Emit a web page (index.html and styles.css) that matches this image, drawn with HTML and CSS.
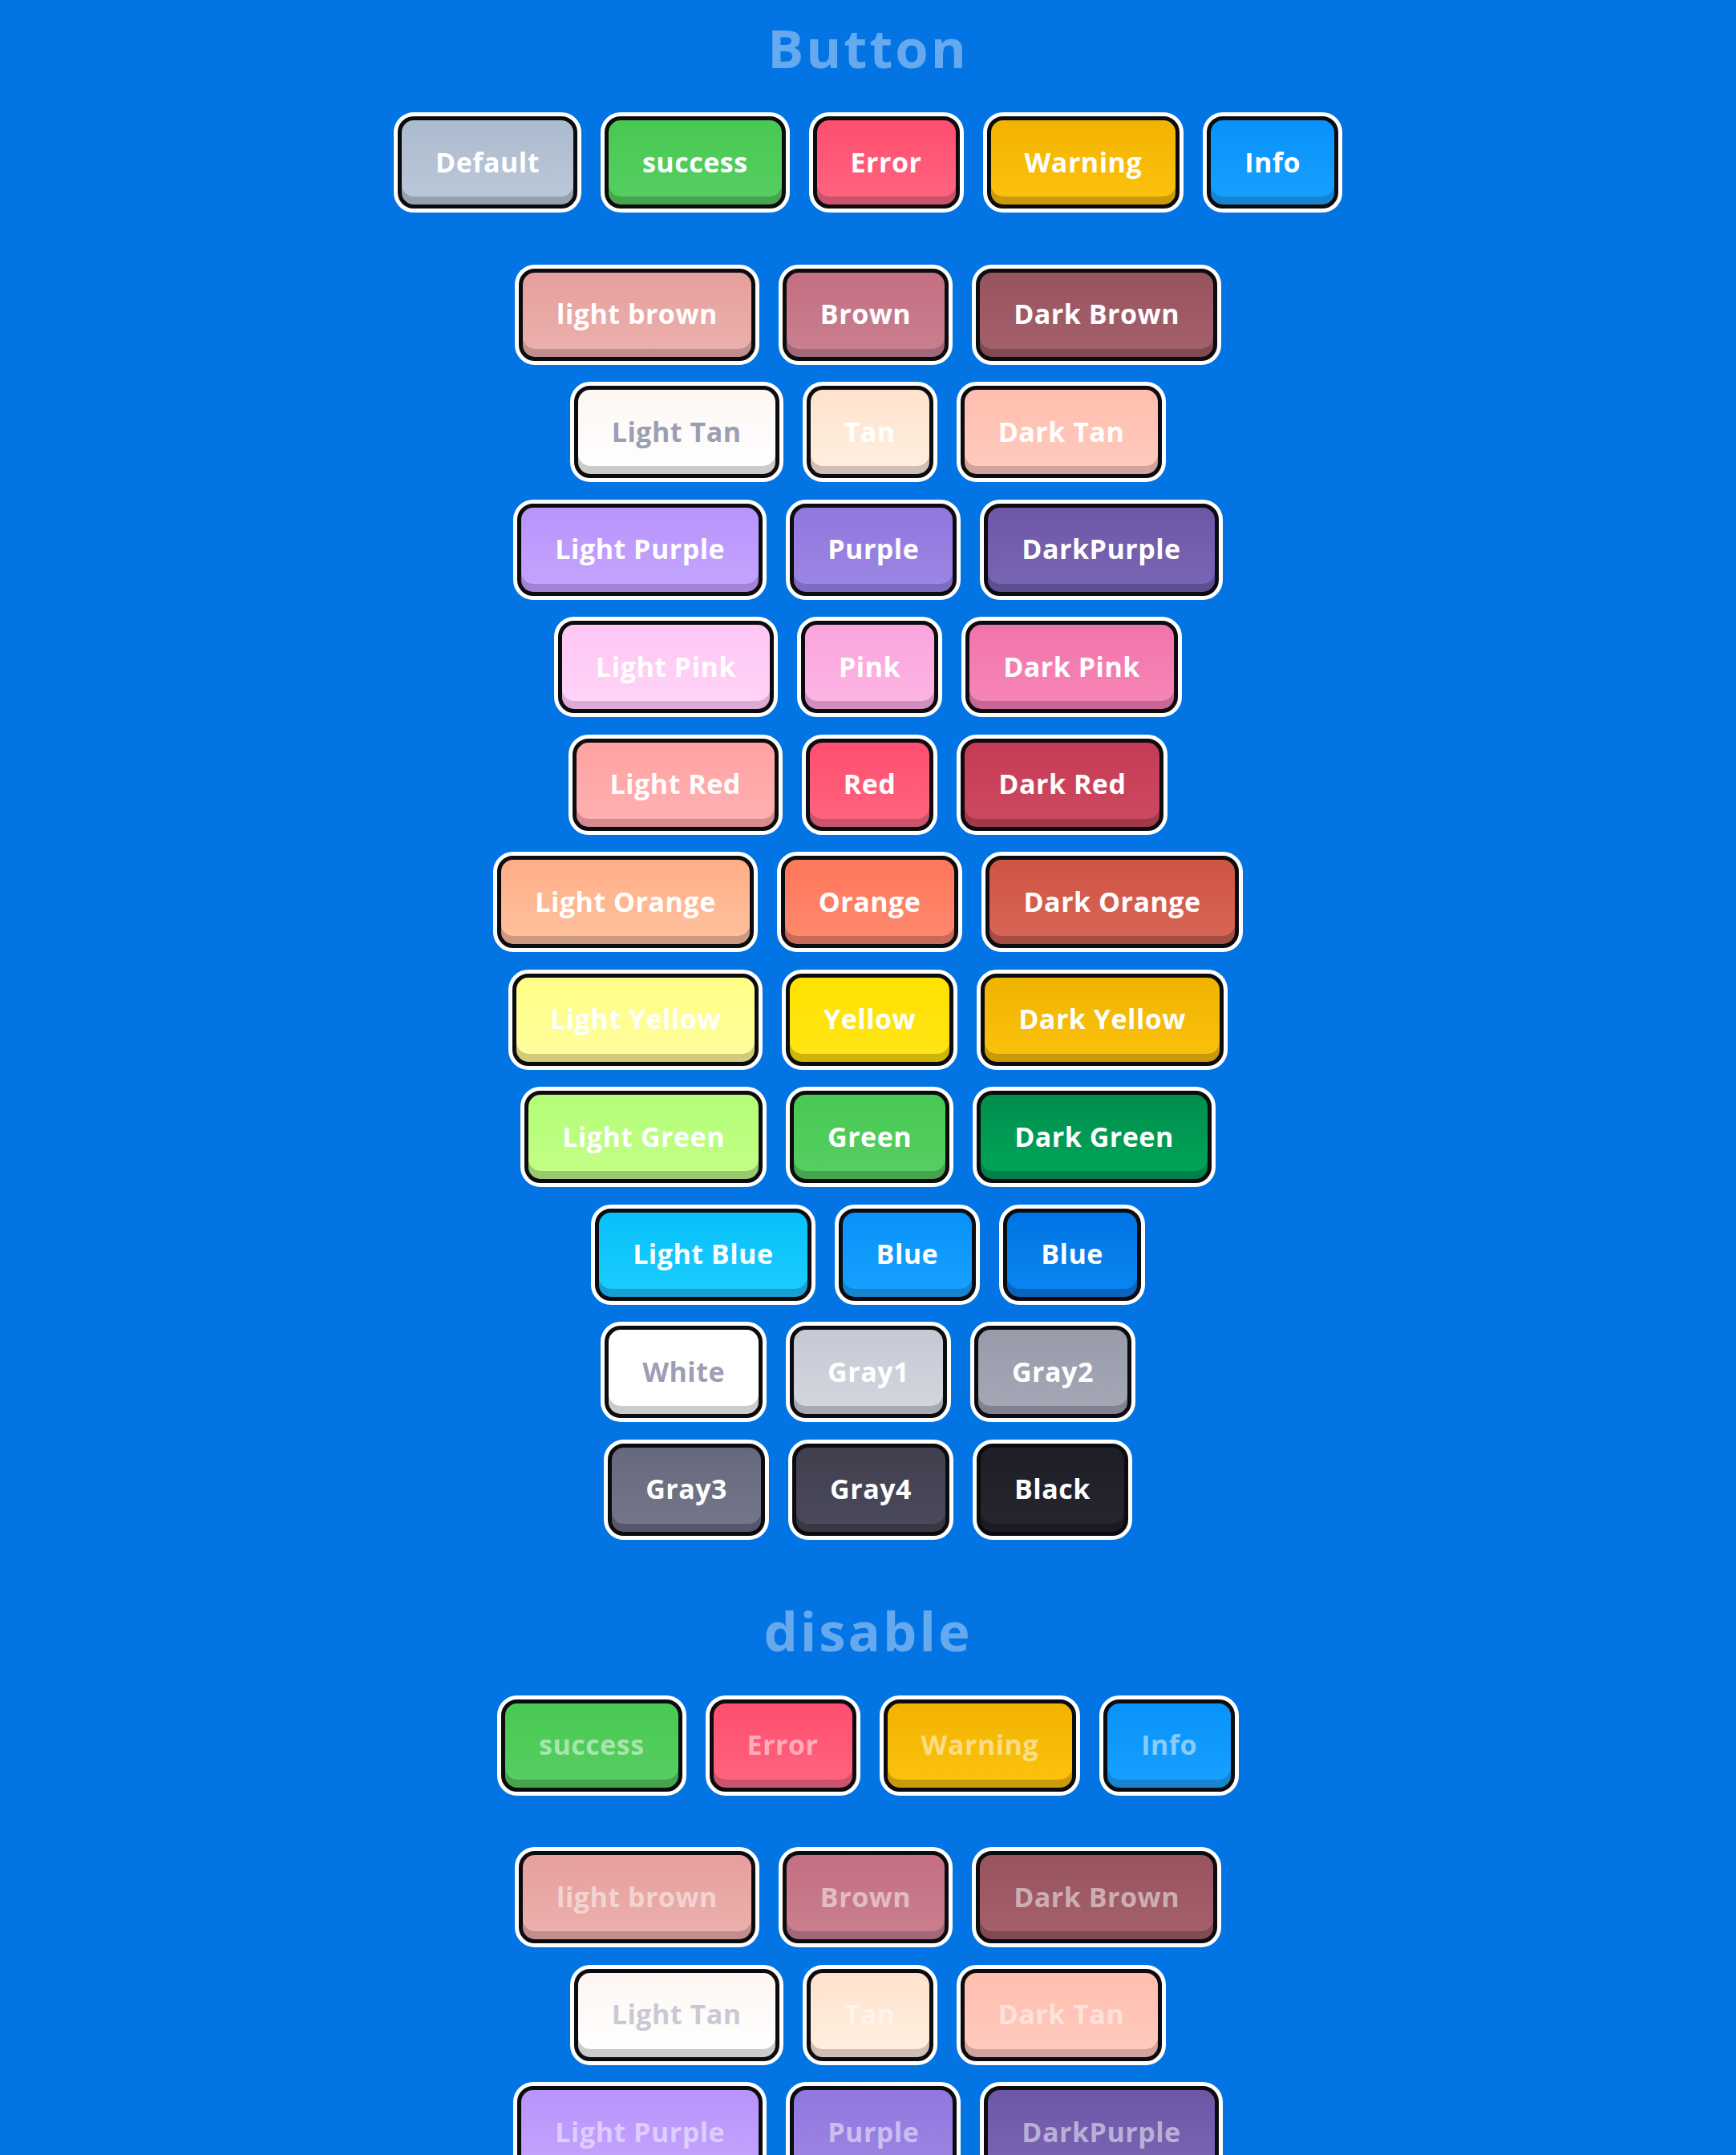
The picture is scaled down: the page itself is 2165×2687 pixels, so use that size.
FILE: index.html
```html
<!DOCTYPE html>
<html lang="en">
<head>
<meta charset="utf-8">
<title>Button</title>
<link rel="stylesheet" href="styles.css">
</head>
<body>
<section class="section">
  <h2 class="title">Button</h2>
  <div class="group">
    <div class="row">
      <button class="btn c-default"><span class="face">Default</span></button>
      <button class="btn c-success"><span class="face">success</span></button>
      <button class="btn c-error"><span class="face">Error</span></button>
      <button class="btn c-warning"><span class="face">Warning</span></button>
      <button class="btn c-info"><span class="face">Info</span></button>
    </div>
  </div>
  <div class="group">
    <div class="row">
      <button class="btn c-light-brown"><span class="face">light brown</span></button>
      <button class="btn c-brown"><span class="face">Brown</span></button>
      <button class="btn c-dark-brown"><span class="face">Dark Brown</span></button>
    </div>
    <div class="row">
      <button class="btn c-light-tan"><span class="face">Light Tan</span></button>
      <button class="btn c-tan"><span class="face">Tan</span></button>
      <button class="btn c-dark-tan"><span class="face">Dark Tan</span></button>
    </div>
    <div class="row">
      <button class="btn c-light-purple"><span class="face">Light Purple</span></button>
      <button class="btn c-purple"><span class="face">Purple</span></button>
      <button class="btn c-dark-purple"><span class="face">DarkPurple</span></button>
    </div>
    <div class="row">
      <button class="btn c-light-pink"><span class="face">Light Pink</span></button>
      <button class="btn c-pink"><span class="face">Pink</span></button>
      <button class="btn c-dark-pink"><span class="face">Dark Pink</span></button>
    </div>
    <div class="row">
      <button class="btn c-light-red"><span class="face">Light Red</span></button>
      <button class="btn c-red"><span class="face">Red</span></button>
      <button class="btn c-dark-red"><span class="face">Dark Red</span></button>
    </div>
    <div class="row">
      <button class="btn c-light-orange"><span class="face">Light Orange</span></button>
      <button class="btn c-orange"><span class="face">Orange</span></button>
      <button class="btn c-dark-orange"><span class="face">Dark Orange</span></button>
    </div>
    <div class="row">
      <button class="btn c-light-yellow"><span class="face">Light Yellow</span></button>
      <button class="btn c-yellow"><span class="face">Yellow</span></button>
      <button class="btn c-dark-yellow"><span class="face">Dark Yellow</span></button>
    </div>
    <div class="row">
      <button class="btn c-light-green"><span class="face">Light Green</span></button>
      <button class="btn c-green"><span class="face">Green</span></button>
      <button class="btn c-dark-green"><span class="face">Dark Green</span></button>
    </div>
    <div class="row">
      <button class="btn c-light-blue"><span class="face">Light Blue</span></button>
      <button class="btn c-blue"><span class="face">Blue</span></button>
      <button class="btn c-dark-blue"><span class="face">Blue</span></button>
    </div>
    <div class="row">
      <button class="btn c-white"><span class="face">White</span></button>
      <button class="btn c-gray1"><span class="face">Gray1</span></button>
      <button class="btn c-gray2"><span class="face">Gray2</span></button>
    </div>
    <div class="row">
      <button class="btn c-gray3"><span class="face">Gray3</span></button>
      <button class="btn c-gray4"><span class="face">Gray4</span></button>
      <button class="btn c-black"><span class="face">Black</span></button>
    </div>
  </div>
</section>

<section class="section">
  <h2 class="title">disable</h2>
  <div class="group">
    <div class="row">
      <button class="btn c-success" disabled><span class="face">success</span></button>
      <button class="btn c-error" disabled><span class="face">Error</span></button>
      <button class="btn c-warning" disabled><span class="face">Warning</span></button>
      <button class="btn c-info" disabled><span class="face">Info</span></button>
    </div>
  </div>
  <div class="group">
    <div class="row">
      <button class="btn c-light-brown" disabled><span class="face">light brown</span></button>
      <button class="btn c-brown" disabled><span class="face">Brown</span></button>
      <button class="btn c-dark-brown" disabled><span class="face">Dark Brown</span></button>
    </div>
    <div class="row">
      <button class="btn c-light-tan" disabled><span class="face">Light Tan</span></button>
      <button class="btn c-tan" disabled><span class="face">Tan</span></button>
      <button class="btn c-dark-tan" disabled><span class="face">Dark Tan</span></button>
    </div>
    <div class="row">
      <button class="btn c-light-purple" disabled><span class="face">Light Purple</span></button>
      <button class="btn c-purple" disabled><span class="face">Purple</span></button>
      <button class="btn c-dark-purple" disabled><span class="face">DarkPurple</span></button>
    </div>
    <div class="row">
      <button class="btn c-light-pink" disabled><span class="face">Light Pink</span></button>
      <button class="btn c-pink" disabled><span class="face">Pink</span></button>
      <button class="btn c-dark-pink" disabled><span class="face">Dark Pink</span></button>
    </div>
  </div>
</section>
</body>
</html>
```

FILE: styles.css
```css
html, body {
  margin: 0;
  padding: 0;
}

body {
  background: #0274e4;
  font-family: "Open Sans", "Noto Sans", "DejaVu Sans", sans-serif;
}

.section {
  padding-top: 26px;
  display: flex;
  flex-direction: column;
  align-items: center;
}

.section + .section {
  margin-top: 54px;
}

.title {
  margin: 0 0 48px;
  font-size: 67px;
  line-height: 66px;
  font-weight: 700;
  letter-spacing: 3px;
  color: #66a9ef;
}

.group {
  display: flex;
  flex-direction: column;
  align-items: center;
  row-gap: 21.5px;
}

.group + .group {
  margin-top: 64.5px;
}

.row {
  display: flex;
  justify-content: center;
  column-gap: 24px;
}

.btn {
  appearance: none;
  margin: 0;
  padding: 0;
  height: 125px;
  box-sizing: border-box;
  border: 5px solid #ffffff;
  border-radius: 25px;
  background: #ffffff;
  font: inherit;
  cursor: pointer;
  display: flex;
}

.face {
  box-sizing: border-box;
  height: 115px;
  display: flex;
  align-items: center;
  justify-content: center;
  padding: 0 42px 2px;
  border: 5px solid #0c0c10;
  border-radius: 20px;
  background: linear-gradient(to bottom, var(--top), var(--bottom));
  box-shadow: inset 0 -10px 0 var(--band);
  color: var(--text, #ffffff);
  font-size: 34px;
  font-weight: 700;
  letter-spacing: 0.5px;
  white-space: nowrap;
}

.btn:disabled {
  cursor: not-allowed;
}

.btn:disabled .face {
  color: var(--text-off, rgba(255, 255, 255, 0.5));
}

.c-default { --top: #adbbcf; --bottom: #bcc8d8; --band: #97a1ae; }
.c-success { --top: #48c953; --bottom: #57cf62; --band: #45a44d; }
.c-error { --top: #ff4e70; --bottom: #ff6580; --band: #c9546b; }
.c-warning { --top: #f2b300; --bottom: #fcc30d; --band: #c99a0b; }
.c-info { --top: #0992fa; --bottom: #17a1ff; --band: #1784cf; }

.c-light-brown { --top: #e69f9d; --bottom: #ebb1ae; --band: #bf8e8d; }
.c-brown { --top: #c46f82; --bottom: #c9808f; --band: #a26879; }
.c-dark-brown { --top: #97545f; --bottom: #a5626c; --band: #7f4a53; }

.c-light-tan { --top: #fdf7f4; --bottom: #ffffff; --band: #cbcbcb; --text: #9c9eb3; --text-off: #c8c9d5; }
.c-tan { --top: #ffe2cd; --bottom: #fff0e2; --band: #cfbeb2; }
.c-dark-tan { --top: #ffbeae; --bottom: #ffcbbf; --band: #cea49b; }

.c-light-purple { --top: #b894fb; --bottom: #c4a5ff; --band: #a184d8; }
.c-purple { --top: #9177de; --bottom: #9d86e4; --band: #7e6cc2; }
.c-dark-purple { --top: #6d56a6; --bottom: #7b66b6; --band: #5d4e92; }

.c-light-pink { --top: #ffc6f4; --bottom: #ffd4f7; --band: #dcaad4; }
.c-pink { --top: #fba4dc; --bottom: #fdb6e4; --band: #d08fbd; }
.c-dark-pink { --top: #f174ab; --bottom: #f786b7; --band: #c86796; }

.c-light-red { --top: #ffa2a3; --bottom: #ffb1b1; --band: #d58b8f; }
.c-red { --top: #ff4e70; --bottom: #ff6580; --band: #c9546b; }
.c-dark-red { --top: #c53b55; --bottom: #cd4a60; --band: #9f3a4c; }

.c-light-orange { --top: #ffae87; --bottom: #ffc29f; --band: #cc9a80; }
.c-orange { --top: #ff775a; --bottom: #ff8a70; --band: #c96a58; }
.c-dark-orange { --top: #cf5445; --bottom: #d86656; --band: #a44d43; }

.c-light-yellow { --top: #ffff86; --bottom: #fffd9e; --band: #cfcb7b; }
.c-yellow { --top: #ffe200; --bottom: #ffe516; --band: #cdb60c; }
.c-dark-yellow { --top: #f0b400; --bottom: #fbc20c; --band: #c89a0a; }

.c-light-green { --top: #b4fd78; --bottom: #c3ff86; --band: #99c870; }
.c-green { --top: #48c953; --bottom: #57cf62; --band: #45a44d; }
.c-dark-green { --top: #008e4c; --bottom: #00a65a; --band: #00804a; }

.c-light-blue { --top: #08c0fa; --bottom: #1bcdff; --band: #169fd0; }
.c-blue { --top: #0992fa; --bottom: #17a1ff; --band: #1784cf; }
.c-dark-blue { --top: #0074e4; --bottom: #0a86f2; --band: #0a64bf; }

.c-white { --top: #ffffff; --bottom: #ffffff; --band: #cbcbcb; --text: #9c9eb3; --text-off: #c8c9d5; }
.c-gray1 { --top: #c6c9d3; --bottom: #d4d7e0; --band: #a8aab3; }
.c-gray2 { --top: #989baa; --bottom: #a5a8b5; --band: #808290; }
.c-gray3 { --top: #66687c; --bottom: #75778a; --band: #55576a; }
.c-gray4 { --top: #3f3f4e; --bottom: #4b4b5c; --band: #383845; }
.c-black { --top: #1e1e27; --bottom: #26262f; --band: #1a1a22; }
```
